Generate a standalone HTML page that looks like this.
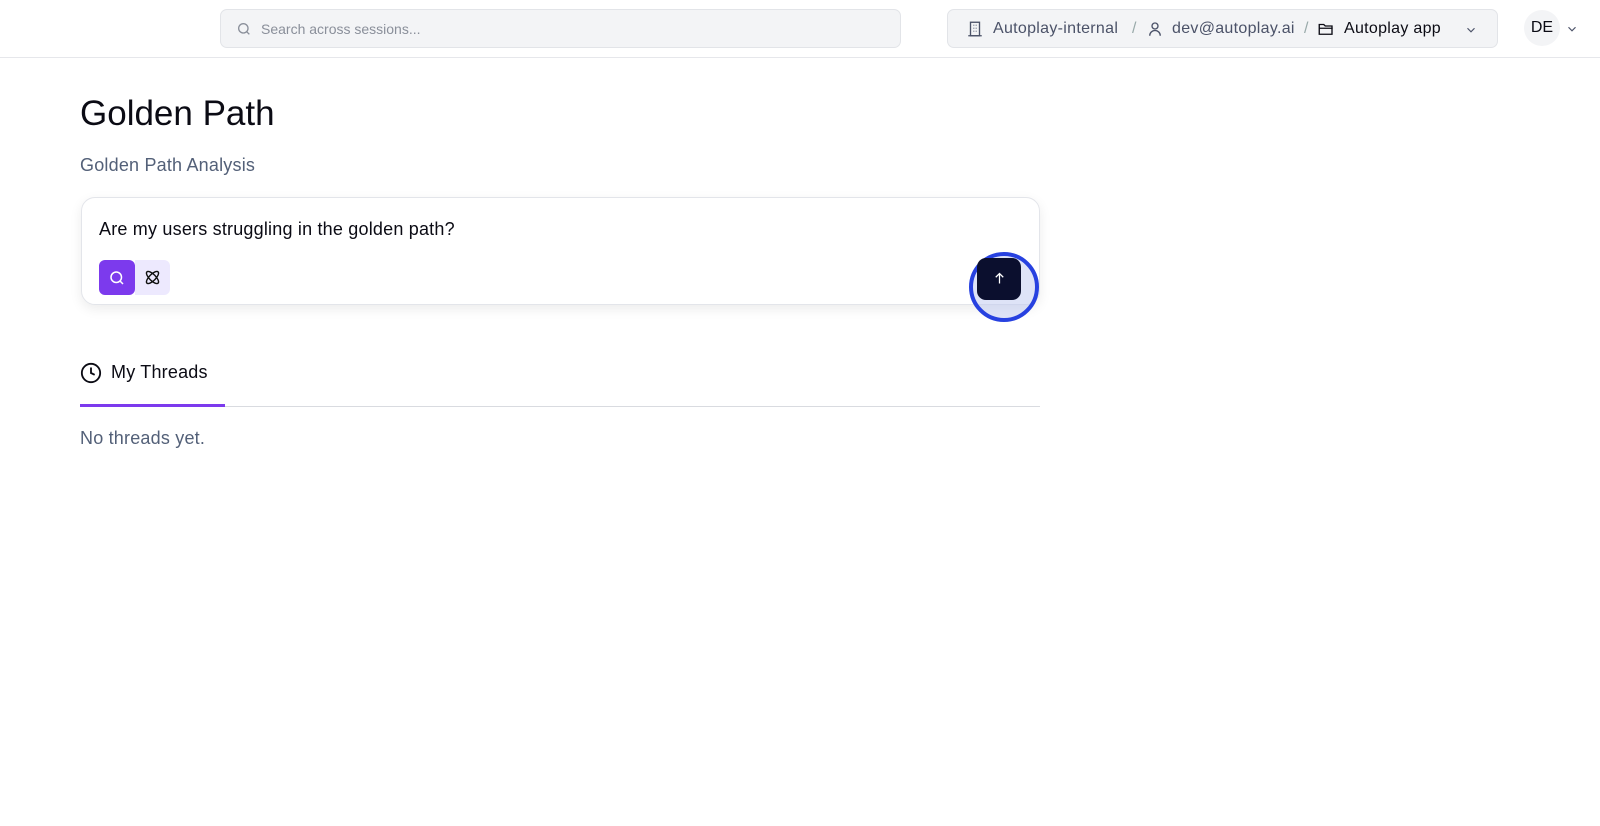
<!DOCTYPE html>
<html><head><style>
*{box-sizing:border-box;margin:0;padding:0}
body{width:1600px;height:826px;background:#fff;font-family:"Liberation Sans",sans-serif;position:relative;overflow:hidden;color:#0b0b14}
.hdr{position:absolute;left:0;top:0;width:1600px;height:58px;border-bottom:1px solid #e6e7eb}
.search{position:absolute;left:220px;top:9px;width:681px;height:39px;background:#f3f4f6;border:1px solid #e2e4e8;border-radius:7px}
.search span{position:absolute;left:40px;top:11px;font-size:14px;color:#8a8f9a}
.crumb{position:absolute;left:947px;top:9px;width:551px;height:39px;background:#f3f4f6;border:1px solid #e2e4e8;border-radius:7px;font-size:16px;color:#4b5268;letter-spacing:0.3px}
.crumb div{position:absolute;top:10px}
.av{position:absolute;left:1524px;top:10px;width:36px;height:36px;border-radius:50%;background:#f3f4f6;font-size:16px;text-align:center;line-height:36px}
h1{position:absolute;left:80px;top:94px;font-weight:400;font-size:35px}
.sub{position:absolute;left:80px;top:155px;font-size:18px;color:#536078;letter-spacing:0.2px}
.box{position:absolute;left:81px;top:197px;width:959px;height:108px;border:1px solid #e3e5ea;border-radius:14px;box-shadow:0 4px 12px rgba(0,0,0,.08)}
.q{position:absolute;left:99px;top:219px;font-size:18px;letter-spacing:0.2px}
.b1{position:absolute;left:99px;top:260px;width:36px;height:35px;background:#7c3aed;border-radius:6px}
.b2{position:absolute;left:135px;top:260px;width:35px;height:35px;background:#ede9fe;border-radius:0 6px 6px 0}
.ring{position:absolute;left:969px;top:252px;width:70px;height:70px;border-radius:50%;border:4px solid #2741e0;background:rgba(190,200,240,.5)}
.send{position:absolute;left:977px;top:258px;width:44px;height:42px;background:#0b0f2e;border-radius:9px}
.tab{position:absolute;left:111px;top:362px;font-size:18px;letter-spacing:0.2px}
.line{position:absolute;left:80px;top:406px;width:960px;height:1px;background:#d9dbe0}
.act{position:absolute;left:80px;top:404px;width:145px;height:3px;background:#7c3aed}
.no{position:absolute;left:80px;top:428px;font-size:18px;color:#536078;letter-spacing:0.2px}
</style></head><body>
<div class="hdr">
<div class="search"><svg style="position:absolute;left:15px;top:11px" width="16" height="16" viewBox="0 0 24 24" fill="none" stroke="#8a8f9a" stroke-width="2"><circle cx="11" cy="11" r="7"/><path d="M20 20l-4-4"/></svg><span>Search across sessions...</span></div>
<div class="crumb">
<svg style="position:absolute;left:18px;top:10px" width="18" height="18" viewBox="0 0 24 24" fill="none" stroke="#4b5268" stroke-width="1.8"><rect x="6" y="3" width="12" height="18"/><path d="M3 21h18M10 7h1M13 7h1M10 11h1M13 11h1M10 15h1M13 15h1"/></svg>
<div style="left:45px">Autoplay-internal</div><div style="left:184px;color:#9aa">/</div>
<svg style="position:absolute;left:198px;top:10px" width="18" height="18" viewBox="0 0 24 24" fill="none" stroke="#4b5268" stroke-width="1.8"><circle cx="12" cy="8" r="4"/><path d="M5 21c0-4 3-7 7-7s7 3 7 7"/></svg>
<div style="left:224px">dev@autoplay.ai</div><div style="left:356px;color:#9aa">/</div>
<svg style="position:absolute;left:369px;top:10px" width="18" height="18" viewBox="0 0 24 24" fill="none" stroke="#0b0b14" stroke-width="1.8"><path d="M3 6h6l2 2h9v11H3z M3 11h18"/></svg>
<div style="left:396px;color:#0b0b14">Autoplay app</div>
<svg style="position:absolute;left:516px;top:13px" width="14" height="14" viewBox="0 0 24 24" fill="none" stroke="#4b5268" stroke-width="2"><path d="M6 9l6 6 6-6"/></svg>
</div>
<div class="av">DE</div>
<svg style="position:absolute;left:1565px;top:22px" width="14" height="14" viewBox="0 0 24 24" fill="none" stroke="#4b5268" stroke-width="2"><path d="M6 9l6 6 6-6"/></svg>
</div>
<h1>Golden Path</h1>
<div class="sub">Golden Path Analysis</div>
<div class="box"></div>
<div class="q">Are my users struggling in the golden path?</div>
<div class="b1"><svg style="position:absolute;left:9px;top:9px" width="18" height="18" viewBox="0 0 24 24" fill="none" stroke="#fff" stroke-width="2"><circle cx="11" cy="11" r="7"/><path d="M20 20l-4-4"/></svg></div>
<div class="b2"><svg style="position:absolute;left:8px;top:8px" width="19" height="19" viewBox="0 0 24 24" fill="none" stroke="#111" stroke-width="1.8"><ellipse cx="12" cy="12" rx="10" ry="4" transform="rotate(45 12 12)"/><ellipse cx="12" cy="12" rx="10" ry="4" transform="rotate(-45 12 12)"/></svg></div>
<div class="ring"></div>
<div class="send"><svg style="position:absolute;left:15px;top:13px" width="15" height="15" viewBox="0 0 24 24" fill="none" stroke="#fff" stroke-width="2"><path d="M12 20V4M6 10l6-6 6 6"/></svg></div>
<svg style="position:absolute;left:80px;top:362px" width="22" height="22" viewBox="0 0 24 24" fill="none" stroke="#0b0b14" stroke-width="2"><circle cx="12" cy="12" r="10"/><path d="M12 6v6l4 2"/></svg>
<div class="tab">My Threads</div>
<div class="line"></div><div class="act"></div>
<div class="no">No threads yet.</div>
</body></html>
